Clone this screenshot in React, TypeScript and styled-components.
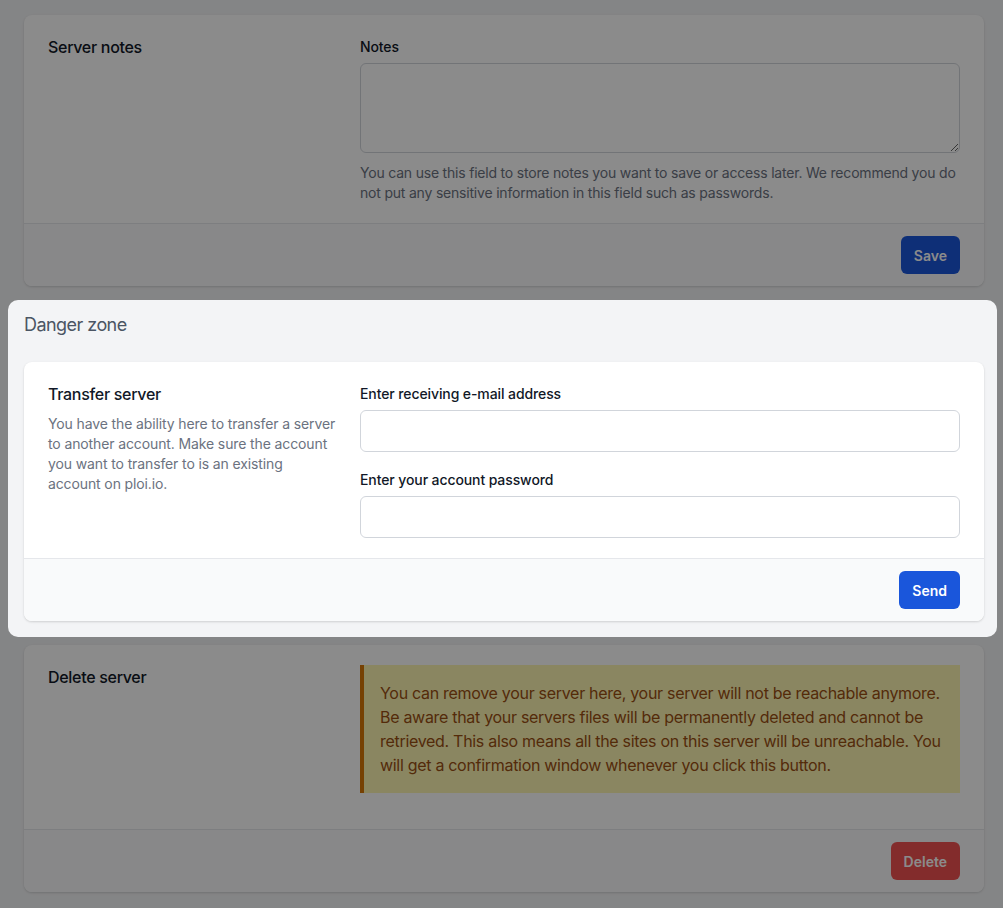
import React from 'react';
import styled, { createGlobalStyle } from 'styled-components';

const GlobalStyle = createGlobalStyle`
  html, body {
    margin: 0;
    padding: 0;
    background: #f3f4f6;
    font-family: 'Inter', 'Noto Sans', sans-serif;
    color: #111827;
  }
  * {
    box-sizing: border-box;
  }
`;

const Page = styled.div`
  width: 1003px;
  min-height: 908px;
  padding: 15px 0 0 24px;
`;

const Column = styled.div`
  width: 960px;
  display: flex;
  flex-direction: column;
`;

const Overlay = styled.div`
  position: fixed;
  inset: 0;
  background: rgba(0, 0, 0, 0.455);
  z-index: 10;
`;

const Highlight = styled.section`
  position: relative;
  z-index: 20;
  margin: 14px -13px 8px -16px;
  padding: 11px 13px 16px 16px;
  background: #f3f4f6;
  border-radius: 10px;
`;

const SectionHeading = styled.h2`
  margin: 0 0 23px;
  font-size: 18px;
  line-height: 28px;
  font-weight: 400;
  letter-spacing: -0.55px;
  color: #4b5563;
`;

const Card = styled.div`
  background: #ffffff;
  border-radius: 8px;
  box-shadow: 0 1px 3px rgba(0, 0, 0, 0.1), 0 1px 2px rgba(0, 0, 0, 0.06);
  overflow: hidden;
`;

const CardBody = styled.div`
  display: grid;
  grid-template-columns: repeat(3, 1fr);
  gap: 24px;
  padding: 20px 24px;
`;

const Aside = styled.div`
  grid-column: span 1;
`;

const Main = styled.div`
  grid-column: span 2;
  display: flex;
  flex-direction: column;
`;

const Title = styled.h3`
  margin: 0;
  font-size: 16px;
  line-height: 24px;
  font-weight: 500;
  letter-spacing: -0.3px;
  color: #111827;
`;

const Description = styled.p`
  margin: 8px 0 0;
  font-size: 14px;
  line-height: 20px;
  letter-spacing: -0.12px;
  color: #6b7280;
`;

const Field = styled.div<{ $spaced?: boolean }>`
  display: flex;
  flex-direction: column;
  margin-top: ${(p) => (p.$spaced ? '16px' : '0')};
`;

const Label = styled.label`
  font-size: 14px;
  line-height: 24px;
  font-weight: 500;
  letter-spacing: -0.1px;
  color: #111827;
  margin-bottom: 4px;
`;

const Input = styled.input`
  height: 42px;
  width: 100%;
  border: 1px solid #d1d5db;
  border-radius: 6px;
  padding: 0 12px;
  font-size: 14px;
  font-family: inherit;
  background: #ffffff;
  outline: none;
`;

const TextArea = styled.textarea`
  height: 90px;
  width: 100%;
  border: 1px solid #d1d5db;
  border-radius: 6px;
  padding: 8px 12px;
  font-size: 14px;
  font-family: inherit;
  background: #ffffff;
  outline: none;
`;

const Help = styled.p`
  margin: 10px 0 0;
  font-size: 14px;
  line-height: 20px;
  letter-spacing: -0.2px;
  color: #6b7280;
`;

const Warning = styled.div`
  background: #fdf6b2;
  border-left: 4px solid #d97706;
  padding: 16px;
  margin-bottom: 16px;
  font-size: 16px;
  line-height: 24px;
  letter-spacing: -0.3px;
  color: #9a4f12;
`;

const Footer = styled.div`
  display: flex;
  justify-content: flex-end;
  padding: 12px 24px;
  background: #f9fafb;
  border-top: 1px solid #e5e7eb;
`;

const Button = styled.button<{ $variant?: 'primary' | 'danger' }>`
  height: 38px;
  padding: 0 13px;
  border: none;
  border-radius: 6px;
  font-family: inherit;
  font-size: 14px;
  font-weight: 600;
  color: #ffffff;
  background: ${(p) => (p.$variant === 'danger' ? '#f05252' : '#1a56db')};
  cursor: pointer;
`;

function App() {
  return (
    <Page>
      <GlobalStyle />
      <Overlay />
      <Column>
        <Card>
          <CardBody>
            <Aside>
              <Title>Server notes</Title>
            </Aside>
            <Main>
              <Field>
                <Label>Notes</Label>
                <TextArea />
              </Field>
              <Help>
                You can use this field to store notes you want to save or access later. We recommend you do
                not put any sensitive information in this field such as passwords.
              </Help>
            </Main>
          </CardBody>
          <Footer>
            <Button>Save</Button>
          </Footer>
        </Card>

        <Highlight>
          <SectionHeading>Danger zone</SectionHeading>
          <Card>
            <CardBody>
              <Aside>
                <Title>Transfer server</Title>
                <Description>
                  You have the ability here to transfer a server to another account. Make sure the account you
                  want to transfer to is an existing account on ploi.io.
                </Description>
              </Aside>
              <Main>
                <Field>
                  <Label>Enter receiving e-mail address</Label>
                  <Input type="email" />
                </Field>
                <Field $spaced>
                  <Label>Enter your account password</Label>
                  <Input type="password" />
                </Field>
              </Main>
            </CardBody>
            <Footer>
              <Button>Send</Button>
            </Footer>
          </Card>
        </Highlight>

        <Card>
          <CardBody>
            <Aside>
              <Title>Delete server</Title>
            </Aside>
            <Main>
              <Warning>
                You can remove your server here, your server will not be reachable anymore. Be aware that your
                servers files will be permanently deleted and cannot be retrieved. This also means all the sites on
                this server will be unreachable. You will get a confirmation window whenever you click this button.
              </Warning>
            </Main>
          </CardBody>
          <Footer>
            <Button $variant="danger">Delete</Button>
          </Footer>
        </Card>
      </Column>
    </Page>
  );
}

export default App;
